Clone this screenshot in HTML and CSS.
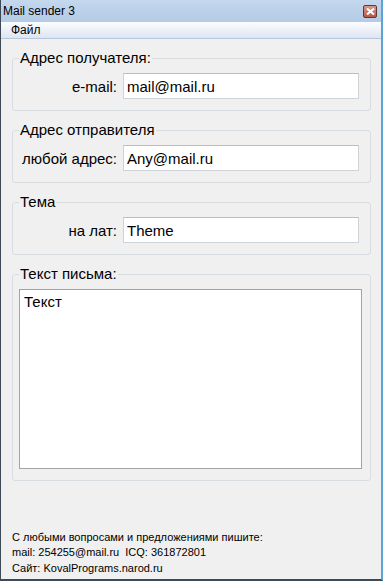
FILE: index.html
```html
<!DOCTYPE html>
<html lang="ru">

<head>
    <meta charset="UTF-8">
    <meta name="viewport" content="width=device-width, initial-scale=1.0">
    <title>Mail sender 3</title>
    <link rel="stylesheet" href="styles.css">
</head>

<body>
    <div class="window">
        <!-- заголовок окна -->
        <div class="titlebar">
            <span class="title">Mail sender 3</span>
            <span class="close-btn">
                <svg width="9" height="7" viewBox="0 0 9 7">
                    <path d="M1 0.5 L8 6.5 M8 0.5 L1 6.5" stroke="#fff" stroke-width="2" />
                </svg>
            </span>
        </div>

        <!-- меню -->
        <div class="menubar">
            <span class="menu-item">Файл</span>
        </div>

        <div class="client">
            <fieldset class="group">
                <legend>Адрес получателя:</legend>
                <div class="row">
                    <label for="toInput">e-mail:</label>
                    <input type="text" id="toInput" value="mail@mail.ru">
                </div>
            </fieldset>

            <fieldset class="group">
                <legend>Адрес отправителя</legend>
                <div class="row">
                    <label for="fromInput">любой адрес:</label>
                    <input type="text" id="fromInput" value="Any@mail.ru">
                </div>
            </fieldset>

            <fieldset class="group">
                <legend>Тема</legend>
                <div class="row">
                    <label for="subjInput">на лат:</label>
                    <input type="text" id="subjInput" value="Theme">
                </div>
            </fieldset>

            <fieldset class="group group-body">
                <legend>Текст письма:</legend>
                <textarea id="bodyInput">Текст</textarea>
            </fieldset>

            <!-- контакты -->
            <div class="footer">
                <div>С любыми вопросами и предложениями пишите:</div>
                <div>mail: 254255@mail.ru&nbsp; ICQ: 361872801</div>
                <div>Сайт: KovalPrograms.narod.ru</div>
            </div>
        </div>
    </div>
</body>

</html>
```

FILE: styles.css
```css
* {
    margin: 0;
    padding: 0;
    box-sizing: border-box;
}

body {
    font-family: 'Liberation Sans', Arial, sans-serif;
    background-color: #f0f0f0;
}

/* окно */
.window {
    width: 383px;
    height: 581px;
    display: flex;
    flex-direction: column;
    background-color: #f0f0f0;
    border-left: 1px solid #3d4a55;
    border-bottom: 2px solid #3d4a55;
    border-right: 2px solid #5aa4d6;
}

.titlebar {
    height: 22px;
    display: flex;
    align-items: center;
    justify-content: space-between;
    padding: 0 4px 0 2px;
    background: linear-gradient(#c4d8ee, #b3cbe5);
}

.title {
    font-size: 12px;
    color: #000;
}

.close-btn {
    width: 14px;
    height: 13px;
    display: flex;
    align-items: center;
    justify-content: center;
    background: linear-gradient(#d79a8c, #b8584a);
    border: 1px solid #5a3a36;
    border-radius: 2px;
    margin-top: 1px;
}

.menubar {
    height: 17px;
    display: flex;
    align-items: center;
    padding-left: 10px;
    background: linear-gradient(#fbfcfe, #dde5f3);
    border-bottom: 1px solid #b9c6d8;
}

.menu-item {
    font-size: 12px;
    color: #000;
}

/* рабочая область */
.client {
    flex: 1;
    display: flex;
    flex-direction: column;
    padding: 10px 10px 0 11px;
}

.group {
    border: 1px solid #d8dde2;
    border-radius: 3px;
    padding: 6px 11px 11px 6px;
    margin-bottom: 10px;
}

.group legend {
    font-size: 15px;
    line-height: 18px;
    padding: 0 1px;
    color: #000;
}

.row {
    display: flex;
    align-items: center;
}

.row label {
    width: 98px;
    margin-right: 6px;
    text-align: right;
    font-size: 15px;
    color: #000;
}

.row input {
    flex: 1;
    height: 26px;
    padding: 0 3px;
    font-family: inherit;
    font-size: 15px;
    border: 1px solid #cfd2d6;
    border-top-color: #b9bcc1;
    background: #fff;
    outline: none;
}

.group-body {
    padding-right: 8px;
}

.group-body textarea {
    display: block;
    width: 100%;
    height: 180px;
    padding: 3px 4px;
    font-family: inherit;
    font-size: 15px;
    border: 1px solid #a3a3a3;
    background: #fff;
    resize: none;
    outline: none;
}

.footer {
    margin-top: auto;
    padding: 0 0 3px 0;
    font-size: 11px;
    line-height: 15.5px;
    color: #000;
}
```
